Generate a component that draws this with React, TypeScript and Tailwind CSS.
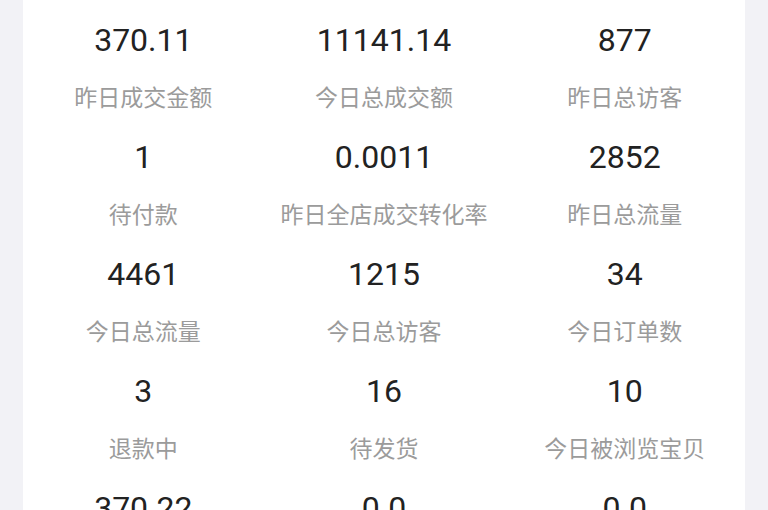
const stats = [
  { value: "370.11", label: "昨日成交金额" },
  { value: "11141.14", label: "今日总成交额" },
  { value: "877", label: "昨日总访客" },
  { value: "1", label: "待付款" },
  { value: "0.0011", label: "昨日全店成交转化率" },
  { value: "2852", label: "昨日总流量" },
  { value: "4461", label: "今日总流量" },
  { value: "1215", label: "今日总访客" },
  { value: "34", label: "今日订单数" },
  { value: "3", label: "退款中" },
  { value: "16", label: "待发货" },
  { value: "10", label: "今日被浏览宝贝" },
  { value: "370.22", label: "本月成交金额" },
  { value: "0.0", label: "今日退款金额" },
  { value: "0.0", label: "昨日退款金额" },
];

function StatCell({ value, label }: { value: string; label: string }) {
  return (
    <div className="flex flex-col items-center pb-[23px]">
      <div className="h-[44px] leading-[44px] text-[32px] text-[#222222] font-['Roboto','Noto_Sans_CJK_SC',sans-serif]">
        {value}
      </div>
      <div className="mt-[18px] h-[32px] leading-[32px] text-[23px] text-[#9b9b9b] font-['Noto_Sans_CJK_SC',sans-serif] whitespace-nowrap">
        {label}
      </div>
    </div>
  );
}

export default function App() {
  return (
    <div className="min-h-[510px] bg-[#f2f2f6] px-[23px]">
      <div className="bg-white pt-[18px]">
        <div className="grid grid-cols-3">
          {stats.map((s, i) => (
            <StatCell key={i} value={s.value} label={s.label} />
          ))}
        </div>
      </div>
    </div>
  );
}
